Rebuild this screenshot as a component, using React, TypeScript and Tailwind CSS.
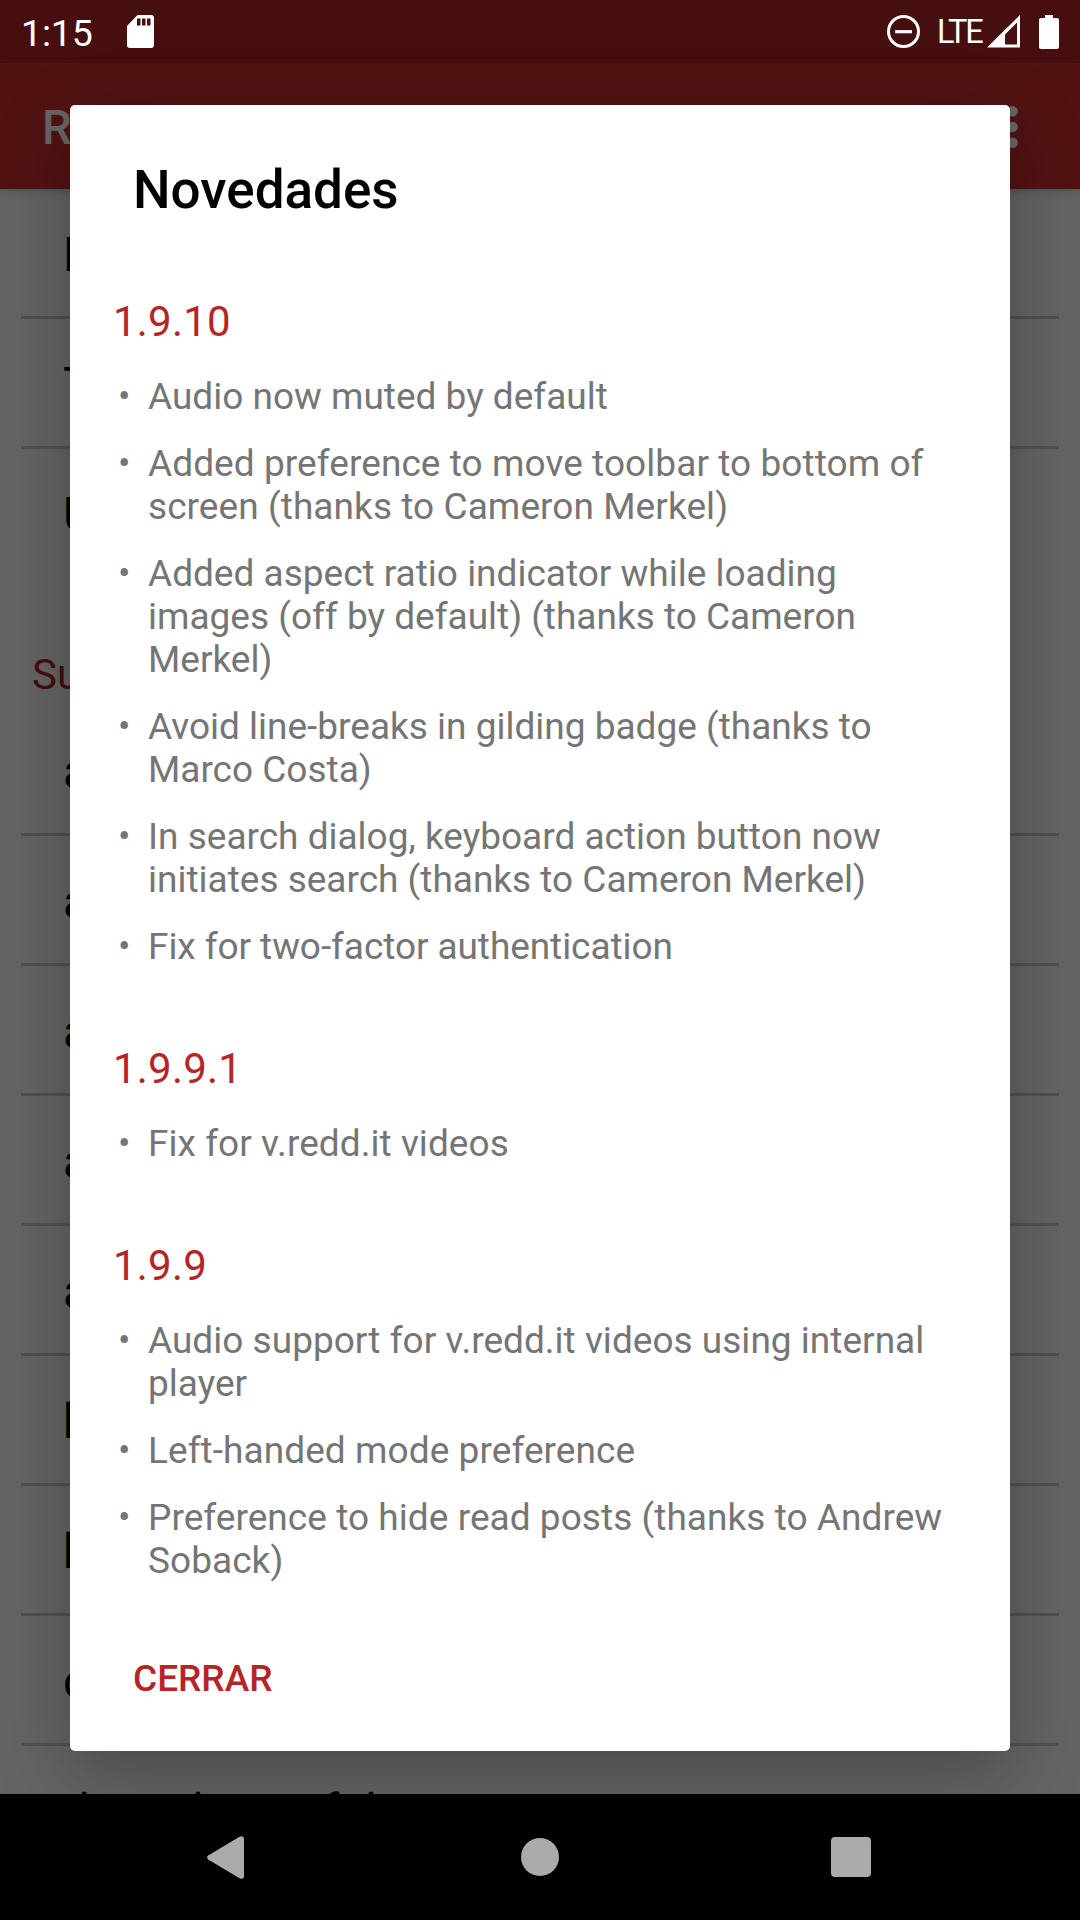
import React from "react";

const pinned = ["Página principal", "Todos los subreddits", "Ubicación personalizada"];

const subreddits = [
  "announcements",
  "art",
  "askreddit",
  "askscience",
  "aww",
  "blog",
  "books",
  "creepy",
  "dataisbeautiful",
];

type Note = { lines: string[]; tracking?: string };

const releases: { version: string; notes: Note[] }[] = [
  {
    version: "1.9.10",
    notes: [
      { lines: ["Audio now muted by default"] },
      {
        lines: ["Added preference to move toolbar to bottom of", "screen (thanks to Cameron Merkel)"],
        tracking: "tracking-[0.07px]",
      },
      { lines: ["Added aspect ratio indicator while loading", "images (off by default) (thanks to Cameron", "Merkel)"] },
      { lines: ["Avoid line-breaks in gilding badge (thanks to", "Marco Costa)"] },
      { lines: ["In search dialog, keyboard action button now", "initiates search (thanks to Cameron Merkel)"] },
      { lines: ["Fix for two-factor authentication"], tracking: "tracking-[-0.07px]" },
    ],
  },
  { version: "1.9.9.1", notes: [{ lines: ["Fix for v.redd.it videos"], tracking: "tracking-[0.05px]" }] },
  {
    version: "1.9.9",
    notes: [
      { lines: ["Audio support for v.redd.it videos using internal", "player"], tracking: "tracking-[0.02px]" },
      { lines: ["Left-handed mode preference"], tracking: "tracking-[0.07px]" },
      { lines: ["Preference to hide read posts (thanks to Andrew", "Soback)"], tracking: "tracking-[0.05px]" },
    ],
  },
];

function Row({ label, divider = true }: { label: string; divider?: boolean }) {
  return (
    <div className="flex h-[130px] shrink-0 flex-col px-[21px]">
      <div className="flex h-[127px] items-center pt-[6px] pl-[42px] text-[47.25px] leading-[55px] text-black">{label}</div>
      {divider && <div className="h-[3px] bg-[#c8c8c8]" />}
    </div>
  );
}

function StatusBar() {
  return (
    <div className="flex h-[63px] items-center pr-[21px] pl-[21px] text-white">
      <span className="w-[105.5px] pt-[3px] text-[37.5px] leading-[44px] tracking-[-0.2px]">1:15</span>
      <svg className="h-[33px] w-[27px]" viewBox="0 0 27 33">
        <path
          fill="#fff"
          fillRule="evenodd"
          d="M10.500 0H24a3 3 0 0 1 3 3v27a3 3 0 0 1-3 3H3a3 3 0 0 1-3-3V11zM10 3.500v7h3.500v-7zM15 3.500v7h3.500v-7zM20 3.500v7h3.500v-7z"
        />
      </svg>
      <div className="ml-auto flex items-center">
        <svg className="h-[33px] w-[33px]" viewBox="0 0 33 33">
          <circle cx="16.500" cy="16.500" r="15" fill="none" stroke="#fff" strokeWidth="3" />
          <path d="M8.200 16.700h16.800" stroke="#fff" strokeWidth="3.200" />
        </svg>
        <span className="ml-[17px] w-[50px] text-[32.5px] leading-[40px] tracking-[-2.2px]">LTE</span>
        <svg className="h-[33px] w-[33px]" viewBox="0 0 33 33">
          <path fill="#fff" fillRule="evenodd" d="M33 0v32.500H0zM30 7.500L18 19.500V29.500H30z" />
        </svg>
        <svg className="ml-[19px] h-[34px] w-[20px]" viewBox="0 0 20 34">
          <path fill="#fff" d="M6 0h8v3h4a2 2 0 0 1 2 2v27a2 2 0 0 1-2 2H2a2 2 0 0 1-2-2V5a2 2 0 0 1 2-2h4z" />
        </svg>
      </div>
    </div>
  );
}

function Dialog() {
  return (
    <div className="mx-auto mt-[42px] flex h-[1646px] w-[940px] shrink-0 flex-col rounded-[5px] bg-white shadow-[0_22px_72px_rgba(0,0,0,0.28)]">
      <h1 className="mt-[54px] ml-[63px] text-[53px] leading-[62px] font-medium text-black">Novedades</h1>
      <div className="mt-[76px] flex flex-col gap-[76px] pl-[42px]">
        {releases.map((release) => (
          <section key={release.version}>
            <h2 className="pl-px text-[42px] leading-[49px] tracking-[0.2px] text-[#b52525]">{release.version}</h2>
            <ul className="mt-[29px] flex flex-col gap-[24px]">
              {release.notes.map(({ lines, tracking = "tracking-normal" }) => (
                <li key={lines[0]} className="flex text-[37px] leading-[43px] text-[#757575]">
                  <span className="w-[36px] pl-[6px]">•</span>
                  <p className={`whitespace-nowrap ${tracking}`}>
                    {lines.map((line) => (
                      <span key={line} className="block">{line}</span>
                    ))}
                  </p>
                </li>
              ))}
            </ul>
          </section>
        ))}
      </div>
      <button className="mt-auto mb-[51px] ml-[63px] self-start text-[37px] leading-[43px] font-medium text-[#b52525]">
        CERRAR
      </button>
    </div>
  );
}

export default function App() {
  return (
    <div className="relative flex h-[1920px] w-[1080px] flex-col overflow-hidden bg-[#fafafa] font-['Roboto',sans-serif]">
      <div className="h-[63px] shrink-0 bg-[#b02525]" />
      <header className="relative flex h-[126px] shrink-0 items-center justify-between bg-[#cc2e2e] pr-[62px] pl-[42px] text-white shadow-[0_4px_8px_rgba(0,0,0,0.15)]">
        <span className="pt-[5px] text-[47.25px] leading-[55px] font-medium">RedReader</span>
        <div className="flex items-center gap-[80px]">
          <svg className="h-[48px] w-[48px]" viewBox="0 0 48 48">
            <path fill="none" stroke="#fff" strokeWidth="5" d="M36 13A17 17 0 1 0 40 28M38 7v12H27" />
          </svg>
          <svg className="mt-px h-[42px] w-[11px]" viewBox="0 0 11 42">
            <circle cx="5.500" cy="5.300" r="5.300" fill="#fff" />
            <circle cx="5.500" cy="21" r="5.300" fill="#fff" />
            <circle cx="5.500" cy="36.700" r="5.300" fill="#fff" />
          </svg>
        </div>
      </header>
      <main className="flex min-h-0 flex-1 flex-col overflow-hidden">
        {pinned.map((label, i) => (
          <Row key={label} label={label} divider={i < pinned.length - 1} />
        ))}
        <h2 className="h-[127px] shrink-0 pt-[71px] pl-[32px] text-[42px] leading-[49px] text-[#b52525]">Suscripciones</h2>
        {subreddits.map((name) => (
          <Row key={name} label={name} />
        ))}
      </main>
      <div className="absolute inset-0 flex flex-col overflow-hidden bg-black/60">
        <StatusBar />
        <Dialog />
      </div>
      <nav className="relative flex h-[126px] shrink-0 items-center bg-black">
        <svg className="ml-[207px] h-[43px] w-[37px]" viewBox="0 0 37 43">
          <path
            fill="#ababab"
            d="M1.200 19.500L32.500.800Q34 0 35.500.400Q37 1 37 2.800V40.200Q37 42 35.500 42.600Q34 43 32.500 42.200L1.200 23.500Q-1 21.500 1.200 19.500z"
          />
        </svg>
        <div className="ml-[277px] h-[38px] w-[38px] rounded-full bg-[#ababab]" />
        <div className="ml-[272px] h-[40px] w-[40px] rounded-[4px] bg-[#ababab]" />
      </nav>
    </div>
  );
}
